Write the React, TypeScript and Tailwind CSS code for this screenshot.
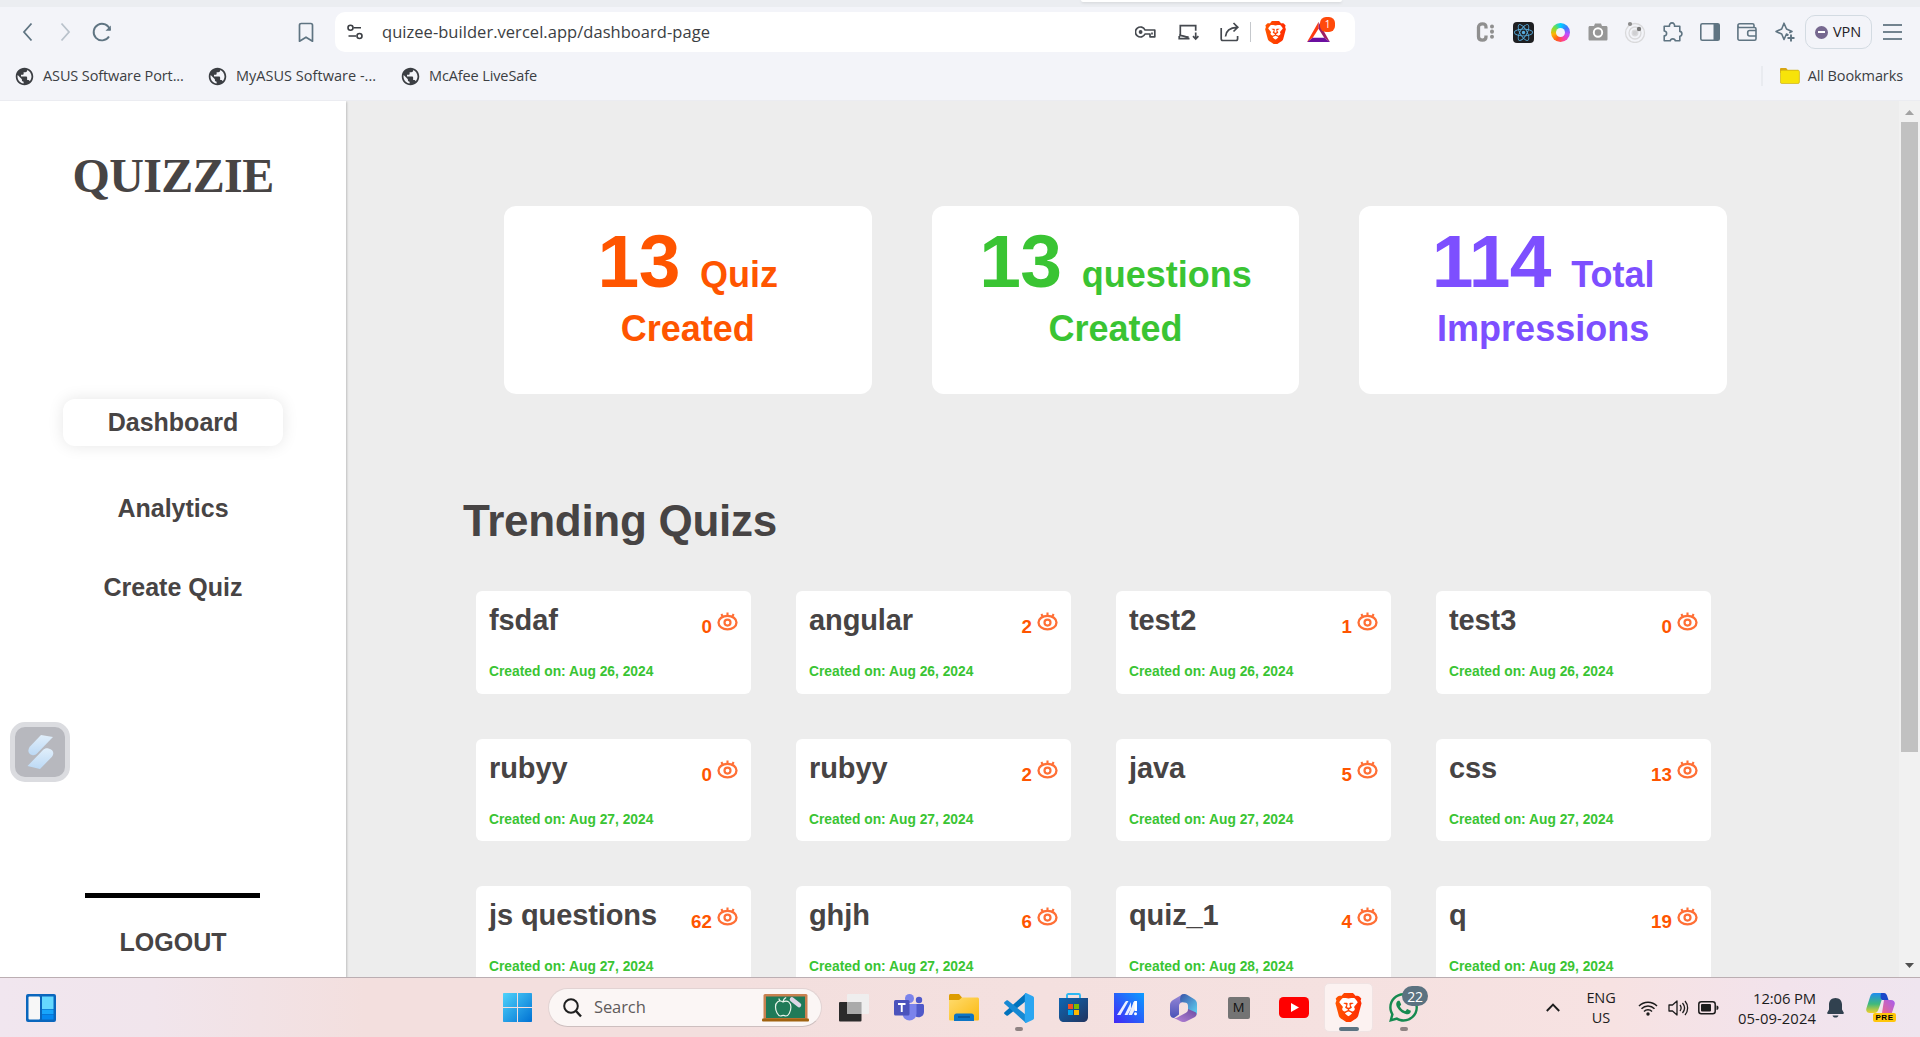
import React from "react";
import { MdPublic } from "react-icons/md";
import { FaReact, FaWhatsapp } from "react-icons/fa";

const stats = [
  { n: "13", a: "Quiz", b: "Created", color: "text-[#ff5500]" },
  { n: "13", a: "questions", b: "Created", color: "text-[#3ac433]" },
  { n: "114", a: "Total", b: "Impressions", color: "text-[#7d4fff]" },
];

const quizzes: [string, number, string][] = [
  ["fsdaf", 0, "Aug 26, 2024"],
  ["angular", 2, "Aug 26, 2024"],
  ["test2", 1, "Aug 26, 2024"],
  ["test3", 0, "Aug 26, 2024"],
  ["rubyy", 0, "Aug 27, 2024"],
  ["rubyy", 2, "Aug 27, 2024"],
  ["java", 5, "Aug 27, 2024"],
  ["css", 13, "Aug 27, 2024"],
  ["js questions", 62, "Aug 27, 2024"],
  ["ghjh", 6, "Aug 27, 2024"],
  ["quiz_1", 4, "Aug 28, 2024"],
  ["q", 19, "Aug 29, 2024"],
];

function Cell({ w, children }: { w: string; children?: React.ReactNode }) {
  return <div className={`flex h-10 shrink-0 items-center justify-center ${w}`}>{children}</div>;
}

function Eye() {
  return (
    <svg width="21" height="19" viewBox="0 0 21 19" fill="none" stroke="#ff6f35" strokeWidth="2.3" className="block">
      <ellipse cx="10.5" cy="10.600" rx="9" ry="6.800" />
      <circle cx="10.5" cy="10.600" r="3" strokeWidth="2.200" />
      <path d="M10.5 4V.6M5.800 4.800 4.400 2M15.200 4.800l1.400-2.800" strokeWidth="2.100" />
    </svg>
  );
}

function BraveLogo({ size, id }: { size: number; id: string }) {
  return (
    <svg width={size} height={size} viewBox="0 0 24 24">
      <defs>
        <linearGradient id={id} x1="0" x2="1">
          <stop offset="0" stopColor="#ff5500" />
          <stop offset="1" stopColor="#ff2a00" />
        </linearGradient>
      </defs>
      <path fill={`url(#${id})`} d="M15.7 0l2.3 2.5s2-.5 2.9.4c1 1 1.700 1.900 1.700 1.900l-.6 1.500.8 2.200-2.600 9.800c-.5 1.900-1.100 2.300-3.200 3.700l-4 2.600c-.6.400-1.400.400-2 0l-4-2.600c-2.100-1.400-2.700-1.800-3.200-3.700L1.200 8.500 2 6.300l-.6-1.500S2.100 3.900 3.100 2.900C4 2 6 2.500 6 2.500L8.300 0z" />
      <path fill="#fff" d="M12 4.600l2.300-.4 2.300-.1c1 .3 3 3.200 3 3.600s-2.300 2.900-2.700 3.400c-.5.600 0 1 .2 1.500.2.600.1 1.300-.4 1.800-.5.500-1.200.9-1.700.9l-2.200-1c-.5-.3-.5-.5 0-.8l1.700-1c.5-.4.3-.7 0-1.200-.4-.7-.9-1.100-.7-1.500.2-.5 1.900-1 2.400-1.400.2-.3-1.600-.3-2.300-.3-.7 0-1.300.3-1.200.8l.5 2.500c0 .5-.4.700-1.200.8-.8-.1-1.200-.3-1.200-.8l.5-2.500c.1-.5-.5-.8-1.200-.8-.7 0-2.500 0-2.300.3.500.4 2.200.9 2.400 1.400.2.400-.3.800-.7 1.500-.3.500-.5.800 0 1.200l1.700 1c.5.300.5.500 0 .8l-2.200 1c-.5 0-1.200-.4-1.700-.9-.5-.5-.6-1.200-.4-1.800.2-.5.700-.9.200-1.500-.4-.5-2.700-3-2.700-3.400s2-3.300 3-3.600l2.300.1zM12 15.300c.6.100 2.700 1.200 2.900 1.500.200.300-2.400 2.400-2.900 2.500-.5-.1-3.100-2.200-2.900-2.500.200-.3 2.300-1.400 2.900-1.500z" />
    </svg>
  );
}

function Bookmark({ children, cls }: { children: string; cls: string }) {
  return (
    <div className={`flex h-8 shrink-0 items-center gap-2 ${cls}`}>
      <MdPublic size={21} color="#3b3e43" />
      <span className="whitespace-nowrap">{children}</span>
    </div>
  );
}

function BrowserChrome() {
  return (
    <header className="h-[101px] shrink-0 border-b border-[#ebecf1] bg-[#f3f4f9] font-['Open_Sans','Noto_Sans',sans-serif] text-[#3b3e43]">
      <div className="flex h-[7px] bg-[#ebedf1] pl-[1081px]">
        <div className="h-[2px] w-[261px] rounded-b-lg bg-white shadow-[0_1px_3px_rgba(0,0,0,.12)]" />
      </div>
      <div className="flex h-[50px] items-center">
        <Cell w="w-[38px] ml-[9px]">
          <svg width="12" height="20" viewBox="0 0 12 20" fill="none" stroke="#5f7482" strokeWidth="1.8"><path d="M9.500 1.500 2 10l7.500 8.500" /></svg>
        </Cell>
        <Cell w="w-[36px]">
          <svg width="12" height="20" viewBox="0 0 12 20" fill="none" stroke="#b9c2cb" strokeWidth="1.8"><path d="m2.500 1.500 7.500 8.500-7.500 8.500" /></svg>
        </Cell>
        <Cell w="w-[38px]">
          <svg width="22" height="22" viewBox="0 0 22 22" fill="none" stroke="#5f7482" strokeWidth="1.900"><path d="M19 9A8.300 8.300 0 1 0 18 15.500" /><path d="M19.800 4.500v5.300h-5.300z" fill="#5f7482" stroke="none" /></svg>
        </Cell>
        <Cell w="w-[30px] ml-[170px]">
          <svg width="16" height="21" viewBox="0 0 16 21" fill="none" stroke="#5f7482" strokeWidth="1.700"><path d="M1.500 3.200c0-1 .7-1.700 1.700-1.700h9.600c1 0 1.700.7 1.700 1.700v16L8 15.200l-6.500 4z" strokeLinejoin="round" /></svg>
        </Cell>
        <div className="ml-[14px] flex h-10 w-[1020px] items-center rounded-[10px] bg-white pl-3">
          <svg width="16" height="16" viewBox="0 0 16 16" fill="none" stroke="#3b3e43" strokeWidth="1.600"><circle cx="3.500" cy="3.800" r="2.500" /><path d="M6.500 3.800H14M1.500 12H9" /><circle cx="12.500" cy="12" r="2.500" /></svg>
          <span className="ml-[19px] w-[332px] whitespace-nowrap text-[16.500px] tracking-[.04px]">quizee-builder.vercel.app/dashboard-page</span>
          <div className="ml-[410px] flex items-center">
            <Cell w="w-[42px]">
              <svg width="21" height="12" viewBox="0 0 21 12" fill="none" stroke="#45494f" strokeWidth="1.700"><path d="M10 4a5 5 0 1 0 0 4h5v2.800h4.800V4z" strokeLinejoin="round" /><circle cx="5.600" cy="6" r="1.900" fill="#45494f" stroke="none" /><path d="M17 6.500v2" /></svg>
            </Cell>
            <Cell w="w-[44px]">
              <svg width="21" height="17" viewBox="0 0 21 17" fill="none" stroke="#45494f" strokeWidth="1.700"><path d="M11.500 14.600H1.200V12M2.300 12V1.700h15.400v5M1.200 11.300c4 0 5 1.800 9.500 1.800M17.700 8.500v6M15 12.200l2.700 2.800 2.700-2.800" /></svg>
            </Cell>
            <Cell w="w-[40px]">
              <svg width="20" height="20" viewBox="0 0 20 20" fill="none" stroke="#45494f" strokeWidth="1.700"><path d="M1.200 6v10.800c0 1 .7 1.700 1.700 1.700h13c1 0 1.700-.7 1.700-1.700V14M5.500 14.500C6 9 9.500 5.500 17 5.300M13.500 1l4.300 4.300-4.300 4.200" /></svg>
            </Cell>
            <div className="h-5 w-px bg-[#c5c8cc]" />
            <Cell w="w-[48px]"><BraveLogo size={23} id="braveSmall" /></Cell>
            <div className="relative flex h-10 w-[38px] items-center justify-center">
              <svg width="23" height="20" viewBox="0 0 24 21"><path d="M12 0 0 21l6-4.500L12 7z" fill="#ff3a10" /><path d="M12 0v7l6 9.500 6 4.500z" fill="#9e1f63" /><path d="M0 21h24l-6-4.500H6z" fill="#6b0fa0" /></svg>
              <span className="absolute left-[21px] top-[5px] flex h-[15px] w-[15px] items-center justify-center rounded-[6px] bg-[#ff4a0b] text-[10px] text-white">1</span>
            </div>
          </div>
        </div>
        <div className="ml-[112px] flex">
          <Cell w="w-[37.400px]">
            <svg width="19" height="20" viewBox="0 0 19 20" fill="none" stroke="#8f8f8f"><path d="M10 6.500V5.200C10 3 8.800 1.800 6.500 1.800S2.500 3 2.500 5.200v9.600c0 2.200 1.300 3.400 4 3.400s3.500-1.200 3.500-3.400v-1.300" strokeWidth="3.300" /><path d="M16 4.500v13" strokeWidth="4" strokeLinecap="round" strokeDasharray="0.1 5" /></svg>
          </Cell>
          <Cell w="w-[37.400px]"><div className="flex h-[21px] w-[21px] items-center justify-center rounded-sm bg-[#1e1f22]"><FaReact size={19} color="#58aee0" /></div></Cell>
          <Cell w="w-[37.400px]"><div className="flex h-[19px] w-[19px] items-center justify-center rounded-full bg-[conic-gradient(#00d0ff,#3a7bff,#c04dff,#ff3fa0,#ff5a1f,#ffb400,#7be03c,#00d0ff)]"><div className="h-[9px] w-[9px] rounded-full bg-[#f3f4f9]" /></div></Cell>
          <Cell w="w-[37.400px]">
            <svg width="20" height="18" viewBox="0 0 20 18"><path d="M6 3l1-2.500h6L14 3h4c1 0 1.500.6 1.500 1.500v11.500c0 1-.6 1.500-1.500 1.500H2C1 17.500.5 17 .5 16V4.500C.5 3.600 1 3 2 3z" fill="#979797" /><circle cx="10" cy="9.500" r="4.200" fill="#979797" stroke="#fff" strokeWidth="1.900" /></svg>
          </Cell>
          <Cell w="w-[37.400px]">
            <svg width="22" height="22" viewBox="0 0 22 22" fill="none" stroke="#d9d9db" strokeWidth="1.300"><circle cx="11" cy="12" r="9.500" /><circle cx="11" cy="12" r="6" /><circle cx="11" cy="12" r="2.800" fill="#cfcfd2" /><circle cx="6" cy="3" r="2.100" fill="#8b8b8b" stroke="none" /><circle cx="15" cy="8" r="2.200" fill="#777" stroke="none" /></svg>
          </Cell>
          <Cell w="w-[37.400px]">
            <svg width="20" height="20" viewBox="0 0 20 20" fill="none" stroke="#5f7482" strokeWidth="1.600" strokeLinejoin="round"><path d="M1.200 4.200h5.300a2.600 2.600 0 1 1 5 0h5.300v5.200c2.800.3 2.800 4.600 0 4.900v4.500h-4.500c-.4-2.600-4.600-2.600-5 0H1.200v-5c3.200-.2 3.200-4.600 0-4.800z" /></svg>
          </Cell>
          <Cell w="w-[37.400px]">
            <svg width="20" height="18" viewBox="0 0 20 18"><rect x=".8" y=".8" width="18.400" height="16.400" rx="1.500" fill="none" stroke="#5f7482" strokeWidth="1.600" /><path d="M13.500 1h5.700v16h-5.700z" fill="#5f7482" /></svg>
          </Cell>
          <Cell w="w-[37.400px]">
            <svg width="20" height="18" viewBox="0 0 20 18" fill="none" stroke="#5f7482" strokeWidth="1.600"><path d="M17 4.500V2.300c0-1-.5-1.500-1.500-1.500H2.800c-2.500 0-2.500 3.700 0 3.700h14.700c.9 0 1.500.5 1.500 1.400v9.800c0 1-.6 1.500-1.500 1.500H2.500C1.500 17.200.9 16.500.9 15.500V2.800" /><path d="M19 7.500h-6.300c-1.200 0-2 .8-2 2v1.500c0 1.200.8 2 2 2H19" /></svg>
          </Cell>
          <Cell w="w-[37.400px]">
            <svg width="20" height="20" viewBox="0 0 20 20" fill="none" stroke="#5f7482" strokeWidth="1.600" strokeLinejoin="round"><path d="M13.500 13.200 11.500 12l-2.500 5.500L6.700 12 1 9.500 6.700 7 9 1.200 11.500 7 17 9.500l-2.800 1.300" /><path d="M16 12.500v7M12.500 16h7" strokeWidth="1.900" /></svg>
          </Cell>
        </div>
        <div className="ml-px flex h-[34px] w-[67px] items-center justify-center gap-[5px] rounded-[10px] border border-[#d3dbe2]">
          <span className="flex h-[13px] w-[13px] items-center justify-center rounded-full bg-[#76688f]"><span className="h-[2px] w-[7px] bg-white" /></span>
          <span className="text-[14.500px] tracking-[-.1px] text-[#1f2226]">VPN</span>
        </div>
        <div className="ml-[11px] flex flex-col gap-[5px]">
          <div className="h-[2px] w-[19px] bg-[#72838f]" />
          <div className="h-[2px] w-[19px] bg-[#72838f]" />
          <div className="h-[2px] w-[19px] bg-[#72838f]" />
        </div>
      </div>
      <div className="flex h-[38px] items-center text-[14.500px] tracking-[-.12px]">
        <Bookmark cls="ml-[14px] w-[193px]">ASUS Software Port...</Bookmark>
        <Bookmark cls="w-[193px] tracking-[.02px]">MyASUS Software -...</Bookmark>
        <Bookmark cls="">McAfee LiveSafe</Bookmark>
        <div className="ml-auto mr-[17px] flex items-center">
          <div className="h-5 w-[2px] bg-[#e9ebf0]" />
          <svg width="20" height="16" viewBox="0 0 20 16" className="ml-[17px]"><path d="M0 1.200C0 .5.500 0 1.200 0h5l1.500 2H18v3H0z" fill="#d9a514" /><rect x=".4" y="2.200" width="19" height="13.300" rx="1.500" fill="#f7e30a" stroke="#cdb21a" strokeWidth=".7" /></svg>
          <span className="ml-[8px] whitespace-nowrap tracking-[-.1px]">All Bookmarks</span>
        </div>
      </div>
    </header>
  );
}

function Sidebar() {
  return (
    <aside className="z-10 flex w-[346px] shrink-0 flex-col items-center bg-white text-[25px] font-bold leading-[29px] text-[#474444] shadow-[1px_1px_2px_rgba(0,0,0,.2)]">
      <h1 className="mt-[47px] h-[56px] font-['Liberation_Serif',serif] text-[48px] font-bold leading-[55px] tracking-[-.6px]">QUIZZIE</h1>
      <nav className="mt-[195px] flex w-full flex-col items-center">
        <a className="flex h-[47px] w-[220px] items-center justify-center rounded-[12px] bg-white shadow-[0_0_16px_rgba(0,0,0,.1)]">Dashboard</a>
        <a className="mt-[48px]">Analytics</a>
        <a className="mt-[50px]">Create Quiz</a>
      </nav>
      <div className="mt-[120px] w-full pl-[10px]">
        <div className="flex h-[60px] w-[60px] items-center justify-center rounded-[15px] border-[5px] border-[#dbdce0] bg-[#b7b8be]">
          <svg width="27" height="34" viewBox="0 0 27 34">
            <defs><linearGradient id="ribbon" x1="0" y1="0" x2="0" y2="1"><stop offset="0" stopColor="#e1effb" /><stop offset="1" stopColor="#bcd9f5" /></linearGradient></defs>
            <path d="M14 0l12 2L10 18.500c-1.500 1.500-3 2-5 1.500C1 19 .3 15 3 11.500z" fill="url(#ribbon)" />
            <path d="M13 34 .5 31 16 15c1.500-1.600 3.500-2.200 5.500-1.600 5 1 6 5.300 3.500 8.400z" fill="url(#ribbon)" />
          </svg>
        </div>
      </div>
      <div className="mr-px mt-[111px] h-[5px] w-[175px] bg-black" />
      <a className="mt-[30px]">LOGOUT</a>
    </aside>
  );
}

function Dashboard() {
  return (
    <main className="h-full min-w-0 flex-1 overflow-hidden bg-[#ededed] pt-[105px]">
      <section className="ml-[158px] grid w-[1223px] grid-cols-3 gap-[60px]">
        {stats.map((s, i) => (
          <div key={i} className={`h-[188px] rounded-[12px] bg-white pt-[13px] text-center text-[36px] font-bold leading-[54px] ${s.color}`}>
            <div className="h-[84px] whitespace-pre leading-[84px]"><span className="text-[75px] tracking-[-.6px]">{s.n} </span>{s.a}</div>
            <div className="-mt-px">{s.b}</div>
          </div>
        ))}
      </section>
      <h2 className="ml-[117px] mt-[101px] h-[52px] text-[44px] font-bold leading-[52px] tracking-[-.28px] text-[#474444]">Trending Quizs</h2>
      <section className="ml-[130px] mt-[44px] grid w-[1235px] grid-cols-4 gap-x-[45px] gap-y-[45px]">
        {quizzes.map(([name, n, date], i) => (
          <article key={i} className="flex h-[102.500px] flex-col rounded-[6px] bg-white px-[13px] pt-[12px] font-bold">
            <div className="flex h-[34px] items-start justify-between">
              <span className="text-[29px] leading-[34px] tracking-[-.1px] text-[#474444]">{name}</span>
              <span className="flex items-start gap-[5px] text-[18.800px] leading-[22px] text-[#ff5500]">
                <span className="mt-[13px]">{n}</span>
                <span className="mt-[9px]"><Eye /></span>
              </span>
            </div>
            <div className="mt-[27px] text-[13.800px] leading-4 text-[#3ac433]">Created on: {date}</div>
          </article>
        ))}
      </section>
    </main>
  );
}

function Scrollbar() {
  return (
    <div className="flex w-[21px] shrink-0 flex-col items-center bg-[#f1f1f1]">
      <svg width="9" height="5" viewBox="0 0 9 5" className="mt-[9px]"><path d="M4.500 0 9 5H0z" fill="#a3a3a3" /></svg>
      <div className="mt-[7px] h-[630px] w-[17px] bg-[#c1c1c1]" />
      <svg width="9" height="5" viewBox="0 0 9 5" className="mb-[9px] mt-auto"><path d="M4.500 5 9 0H0z" fill="#505050" /></svg>
    </div>
  );
}

function Task({ children, dot }: { children: React.ReactNode; dot?: boolean }) {
  return (
    <div className="relative flex h-[59px] w-[55px] shrink-0 items-center justify-center">
      {children}
      {dot && <span className="absolute bottom-[6px] left-[24px] h-[4px] w-[8px] rounded-full bg-[#8f8383]" />}
    </div>
  );
}

function Taskbar() {
  return (
    <footer className="flex h-[60px] shrink-0 items-center overflow-hidden border-t border-[#bbaeb2] bg-[linear-gradient(90deg,#f1e6ef_0%,#f1e5ec_8%,#f3dfde_19%,#f3dfde_38%,#f5e1e0_70%,#f7e2e2_84%,#f2e3ec_93%,#efe5ef_100%)] font-['Open_Sans','Noto_Sans',sans-serif] text-[#1c1c1c]">
      <svg width="30" height="28" viewBox="0 0 30 28" className="ml-[26px]">
        <rect width="30" height="28" rx="2" fill="#0a66bd" /><rect x="2.500" y="2.500" width="11.500" height="23" rx="1" fill="#f7f7f7" />
        <path d="M16 2.500h11.500V15H16z" fill="#66d9ff" /><path d="M16 15.500h11.500v4.500H16z" fill="#18a5fb" /><path d="M16 20.500h11.500v5H16z" fill="#0588f0" />
      </svg>
      <svg width="29" height="29" viewBox="0 0 29 29" className="ml-[447px]">
        <defs><linearGradient id="win" x1="0" y1="0" x2="1" y2="1"><stop offset="0" stopColor="#4fd3fb" /><stop offset="1" stopColor="#0071d3" /></linearGradient></defs>
        <path fill="url(#win)" d="M1 0h13v14H0V1c0-.6.400-1 1-1zM15 0h13c.6 0 1 .4 1 1v13H15zM0 15h14v14H1c-.6 0-1-.4-1-1zM15 15h14v13c0 .6-.4 1-1 1H15z" />
      </svg>
      <div className="ml-[16px] flex h-[39px] w-[274px] items-center rounded-full border border-[#e2d3d3] border-b-[#cdbfbf] bg-[#fbf6f5]">
        <svg width="19" height="20" viewBox="0 0 19 20" fill="none" stroke="#1f1f1f" strokeWidth="2" className="ml-[14px]"><circle cx="8" cy="8" r="6.800" /><path d="m13 13 5 5.500" strokeWidth="2.400" /></svg>
        <span className="ml-[12px] text-[16.500px] tracking-[-.1px] text-[#5f5b5b]">Search</span>
        <svg width="47" height="28" viewBox="0 0 47 28" className="ml-auto mr-[12px]">
          <rect x="1.500" width="44" height="26" rx="1.500" fill="#c98150" /><rect x="4" y="2.500" width="39" height="21.500" fill="#1f7a58" /><rect y="24.500" width="47" height="3" rx="1" fill="#a0620f" />
          <path d="M21 8c-4-2.500-7.500 0-7.500 5 0 4 2.500 9 5 9 1.200 0 1.700-.6 2.700-.6s1.500.6 2.700.6c2.500 0 5-4.500 5-9s-3.500-7.500-7.900-5zc.3-2 1.800-4 3.200-4.500M20.500 7.500c-2.500 0-3.500-1.500-3.500-3" fill="none" stroke="#e8f3ea" strokeWidth="1.200" />
          <path d="m30 5.500 7 5.500" stroke="#ddd6e6" strokeWidth="4.500" strokeLinecap="round" />
        </svg>
      </div>
      <div className="ml-[4px] flex">
        <Task>
          <svg width="30" height="28" viewBox="0 0 30 28"><rect y="8" width="22.500" height="19.500" rx="1" fill="#2b2b2b" /><rect x="8" width="22" height="20" rx="1" fill="#eee" fillOpacity=".95" /><rect x="8" y="8" width="14.500" height="12" fill="#aaa" /></svg>
        </Task>
        <Task>
          <svg width="30" height="27" viewBox="0 0 30 27"><circle cx="15.500" cy="4.500" r="4.500" fill="#7b83eb" /><circle cx="25" cy="6" r="3.200" fill="#5059c9" /><path d="M21 10h7.500c.8 0 1.500.7 1.500 1.500v6.500a5.500 5.500 0 0 1-9 4z" fill="#5059c9" /><path d="M8.500 10h14v9.500a7 7 0 0 1-14 0z" fill="#7b83eb" /><rect y="6" width="15.500" height="15.500" rx="1.500" fill="#4b53bc" /><path d="M4 10h7.500M7.750 10v8" stroke="#fff" strokeWidth="1.900" /></svg>
        </Task>
        <Task>
          <svg width="30" height="27" viewBox="0 0 30 27"><defs><linearGradient id="folder" x1="0" y1="0" x2="1" y2="1"><stop offset="0" stopColor="#ffdb6e" /><stop offset="1" stopColor="#fbb90f" /></linearGradient></defs><path d="M0 1.500C0 .7.700 0 1.500 0H10l3 3.500V9H0z" fill="#dd9c00" /><path d="M0 6h10l3-2.500h15.500c.8 0 1.500.7 1.500 1.500v20c0 1-.7 1.500-1.500 1.500H1.500C.7 26.500 0 26 0 25z" fill="url(#folder)" /><path d="M5 27v-5c0-1.500 1-2.500 2.500-2.500h15c1.500 0 2.500 1 2.500 2.500v5z" fill="#0d75c4" /><path d="M9 23h12" stroke="#0b4c88" strokeWidth="1.300" /></svg>
        </Task>
        <Task dot>
          <svg width="30" height="30" viewBox="0 0 30 30"><path d="M22 0v8L4 22.500c-.5.400-1.200.4-1.600 0L.5 21c-.6-.5-.6-1.300 0-1.800z" fill="#0073bd" /><path d="M22 30v-8L4 7.500c-.5-.4-1.200-.4-1.600 0L.5 9c-.6.500-.6 1.300 0 1.800z" fill="#1689d3" /><path d="M22 0l7 3.200c.6.300 1 .9 1 1.500v20.600c0 .6-.4 1.200-1 1.500L22 30c-.7.300-1.200-.3-1.200-1V1c0-.7.500-1.300 1.200-1z" fill="#2ba6f1" /></svg>
        </Task>
        <Task>
          <svg width="29" height="29" viewBox="0 0 29 29"><defs><linearGradient id="store" x1="0" y1="0" x2="1" y2="1"><stop offset="0" stopColor="#0e67b4" /><stop offset="1" stopColor="#22345f" /></linearGradient></defs><path d="M8 6V2.200C8 1.500 8.500 1 9.200 1h10.600c.7 0 1.200.5 1.200 1.200V6" fill="none" stroke="#2db8f3" strokeWidth="1.900" /><path d="M0 5h29v19c0 3-2 5-5 5H5c-3 0-5-2-5-5z" fill="url(#store)" /><path d="M9 11h5v5H9z" fill="#f25022" /><path d="M15 11h5v5h-5z" fill="#7fba00" /><path d="M9 17h5v5H9z" fill="#00a4ef" /><path d="M15 17h5v5h-5z" fill="#ffb900" /></svg>
        </Task>
        <Task>
          <svg width="30" height="30" viewBox="0 0 30 30"><defs><linearGradient id="asus" x1="1" y1="0" x2="0" y2="1"><stop offset="0" stopColor="#0b9cff" /><stop offset="1" stopColor="#4327f5" /></linearGradient></defs><path d="M0 0h30v30H0z" fill="url(#asus)" /><path d="M3 22h3.500l8-14H13c-1 0-1.500.3-2 1.200zM10.500 22h3l3.500-6V9z" fill="#fff" fillOpacity=".9" /><path d="M14.500 22H18l5-9.500V8h-1.500c-1 0-1.500.3-2 1.200z" fill="#fff" fillOpacity=".9" /><path d="M20.500 8H23v10h-2.500z" fill="#fff" /><circle cx="21.500" cy="20.700" r="1.500" fill="#fff" /></svg>
        </Task>
        <Task>
          <svg width="27" height="28" viewBox="0 0 27 28">
            <defs>
              <linearGradient id="mA" x1="0" y1="0" x2="0" y2="1"><stop offset="0" stopColor="#9a8ad8" /><stop offset="1" stopColor="#4a52b8" /></linearGradient>
              <linearGradient id="mB" x1="0" y1="0" x2="1" y2="1"><stop offset="0" stopColor="#3a54a8" /><stop offset="1" stopColor="#5fd3f3" /></linearGradient>
              <linearGradient id="mC" x1="0" y1="1" x2="1" y2="0"><stop offset="0" stopColor="#b884d8" /><stop offset="1" stopColor="#6a4aa0" /></linearGradient>
            </defs>
            <path d="M13 0 3 6C1 7 0 9 0 11v9c0 2 1.500 4 4 4l5-3.500V12c0-1.500.7-2.500 2-3.200L16 6z" fill="url(#mA)" />
            <path d="M11.500.8c2-1.200 4-1 5.500 0l7 4.200c2 1.200 3 3 3 5v10L18 17v-5c0-1.500-.5-2.500-2-3.200L10.500 8c-1-3 0-6 1-7.200z" fill="url(#mB)" />
            <path d="M4 24c2 .3 4-.5 5-1.500l7-3.800c1.500-.8 2-2 2-3.700l7 3c1 .5 2 1.500 1.500 3-.3 1-1 1.700-2 2.300l-8 4c-2 1-4 1-6 0z" fill="url(#mC)" />
          </svg>
        </Task>
        <Task><div className="flex h-[22px] w-[22px] items-center justify-center rounded-[2px] bg-[#747474] text-[13px] text-[#111]">M</div></Task>
        <Task><svg width="30" height="21" viewBox="0 0 30 21"><rect width="30" height="21" rx="4.500" fill="#f00" /><path d="m12 6 8 4.500-8 4.500z" fill="#fff" /></svg></Task>
        <Task>
          <div className="flex h-[49px] w-[49px] shrink-0 items-center justify-center rounded-[5px] border border-[#f0e3e3] bg-[#fcf2f1]"><BraveLogo size={29} id="braveBig" /></div>
          <span className="absolute bottom-[6px] left-[18px] h-[4px] w-[20px] rounded-full bg-[#5c7482]" />
        </Task>
        <Task dot>
          <FaWhatsapp size={33} color="#168a50" />
          <span className="absolute left-[26px] top-[8px] flex h-[20px] w-[26px] items-center justify-center rounded-full bg-[#5b7280] text-[14px] tracking-[-.3px] text-white">22</span>
        </Task>
      </div>
      <svg width="14" height="9" viewBox="0 0 14 9" fill="none" stroke="#1c1c1c" strokeWidth="1.900" className="ml-[115px]"><path d="m.8 8 6.200-6.300L13.200 8" /></svg>
      <div className="ml-[17px] w-[48px] text-center text-[14.500px] leading-5 tracking-[-.1px]">ENG<br />US</div>
      <svg width="20" height="16" viewBox="0 0 20 16" fill="none" stroke="#1c1c1c" strokeWidth="1.500" className="ml-[13px]"><path d="M1 6a12.500 12.500 0 0 1 18 0M3.500 8.700a9 9 0 0 1 13 0M6 11.400a5.500 5.500 0 0 1 8 0" /><circle cx="10" cy="14" r="1.700" fill="#1c1c1c" stroke="none" /></svg>
      <svg width="21" height="18" viewBox="0 0 21 18" fill="none" stroke="#1c1c1c" strokeWidth="1.300" className="ml-[10px]"><path d="M1 6h3.500l4.500-4v14l-4.500-4H1z" strokeLinejoin="round" /><path d="M12 6c1.500 2 1.500 4 0 6M14.500 4c2.500 3 2.500 7 0 10M17 2c3.500 4 3.500 10 0 14" /></svg>
      <svg width="21" height="14" viewBox="0 0 21 14" className="ml-[9px]"><rect x=".8" y=".8" width="16.400" height="11.900" rx="2.500" fill="none" stroke="#1c1c1c" strokeWidth="1.500" /><rect x="3" y="3" width="10" height="7.500" rx="1" fill="#1c1c1c" /><path d="M18.500 4.500c1.500 0 2 1 2 2.200s-.5 2.300-2 2.300z" fill="#1c1c1c" /></svg>
      <div className="ml-[8px] w-[89px] whitespace-nowrap text-right text-[14.800px] leading-5 tracking-[.08px]"><div className="tracking-[-.1px]">12:06 PM</div>05-09-2024</div>
      <svg width="17" height="20" viewBox="0 0 17 20" className="ml-[11px]"><path d="M8.500 0C4.500 0 2 2.800 2 6.500v5L.3 14.500c-.4.800 0 1.500.8 1.500h14.800c.8 0 1.200-.7.800-1.500L15 11.500v-5C15 2.800 12.500 0 8.500 0zM5.500 17.500h6c-.5 1.500-1.500 2-3 2s-2.500-.5-3-2z" fill="#31414f" /></svg>
      <div className="relative ml-[22px] h-[29px] w-[30px]">
        <svg width="29" height="24" viewBox="0 0 29 24">
          <defs>
            <linearGradient id="coA" x1="0" y1="0" x2="0" y2="1"><stop offset="0" stopColor="#1e8df0" /><stop offset=".55" stopColor="#3fb97c" /><stop offset="1" stopColor="#f0d12a" /></linearGradient>
            <linearGradient id="coB" x1="1" y1="0" x2="0" y2="1"><stop offset="0" stopColor="#a55df0" /><stop offset="1" stopColor="#ff6a6f" /></linearGradient>
          </defs>
          <path d="M8 0h10l-5 15c-1 3-2 5-5 5H4c-3 0-4.500-2-3.500-5L4 4c.8-2.500 2-4 4-4z" fill="url(#coA)" />
          <path d="M15 0h3c2 0 3 2 3.500 4l1 3H17c-2 0-3-2-2-7z" fill="#1947c9" />
          <path d="M18 7h7c3 0 4.500 2 3.500 5l-3 9c-.5 2-2 3-4 3h-9c2 0 3-2 3.500-4z" fill="url(#coB)" />
        </svg>
        <span className="absolute bottom-0 left-[7px] flex h-[9px] w-[23px] items-center justify-center rounded-[2px] bg-[#ffc60a] font-['Liberation_Sans',sans-serif] text-[8px] font-bold leading-none tracking-[.6px] text-black">PRE</span>
      </div>
    </footer>
  );
}

export default function App() {
  return (
    <div className="flex h-[1037px] w-[1920px] flex-col overflow-hidden bg-white font-['Liberation_Sans',Arial,sans-serif]">
      <BrowserChrome />
      <div className="flex h-[876px] shrink-0 overflow-hidden">
        <Sidebar />
        <Dashboard />
        <Scrollbar />
      </div>
      <Taskbar />
    </div>
  );
}
